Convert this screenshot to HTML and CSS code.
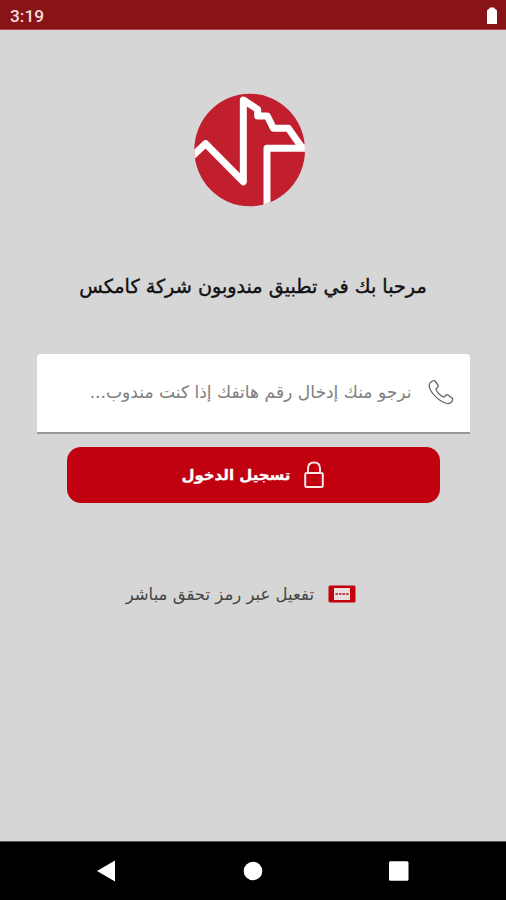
FILE: index.html
```html
<!DOCTYPE html>
<html lang="ar" dir="rtl">
<head>
    <meta charset="UTF-8">
    <meta name="viewport" content="width=device-width, initial-scale=1.0">
    <title>تسجيل الدخول</title>
    <link rel="stylesheet" href="styles.css">
</head>
<body>
    <header class="status">
        <span>3:19</span>
        <svg class="battery" viewBox="0 0 12 18"><path d="M1 4 Q1 2.500 3 2 L4 .5 H8 L9 2 Q11 2.500 11 4 V17 H1 Z" fill="#fff"/></svg>
    </header>

    <main class="login">
        <svg class="logo" viewBox="42 39 336 342">
            <defs>
                <clipPath id="disc"><ellipse cx="209" cy="210" rx="166" ry="169"/></clipPath>
            </defs>
            <g clip-path="url(#disc)">
                <rect x="42" y="39" width="336" height="342" fill="#c11f2e"/>
                <path d="M36 229 L77 191 L190 305 V60 L233 88 V108 H262 L280 145 H325 L365 202 H380 M380 205 H261 V390" fill="none" stroke="#fff" stroke-width="21" stroke-linejoin="round"/>
            </g>
        </svg>

        <h1 class="welcome">مرحبا بك في تطبيق مندوبون شركة كامكس</h1>

        <form class="form">
            <label class="field">
                <svg class="phone" viewBox="0 0 26 26"><path d="M2 4 Q5 .5 7 2 L10 6 Q11 8 8 9.500 Q8 12 11 15 Q14 18 16.500 18 Q18 15 20 16 L24 19 Q25.500 21 23 23.500 Q20 26 14 22.500 Q7 18.500 3 12 Q0 7 2 4 Z" fill="none" stroke="#666" stroke-width="1.300" stroke-linejoin="round"/></svg>
                <input type="tel" dir="rtl" placeholder="نرجو منك إدخال رقم هاتفك إذا كنت مندوب...">
            </label>
            <button type="button" class="submit">
                <svg class="lock" viewBox="0 0 20 28"><path d="M4 12 V7.500 Q4 1.500 10 1.500 Q16 1.500 16 7.500 V12" fill="none" stroke="#fbe4e4" stroke-width="2"/><rect x="1.200" y="12" width="17.600" height="14" rx="1.500" fill="none" stroke="#fbe4e4" stroke-width="2"/></svg>
                <span>تسجيل الدخول</span>
            </button>
        </form>

        <a class="code">
            <svg class="ticket" viewBox="0 0 28 18">
                <rect x=".5" y=".5" width="27" height="17" rx="1.500" fill="#c4000f"/>
                <rect x="6" y="3" width="16" height="12" fill="#e9dede"/>
                <path d="M7.500 9 H20.500" stroke="#b84046" stroke-width="2" stroke-dasharray="2.500 1"/>
            </svg>
            <span>تفعيل عبر رمز تحقق مباشر</span>
        </a>
    </main>

    <nav class="navbar">
        <svg viewBox="0 0 20 22"><path d="M0 11 L18 .5 V21.500 Z" fill="#fff"/></svg>
        <svg viewBox="0 0 20 22"><circle cx="10" cy="11" r="9.300" fill="#fff"/></svg>
        <svg viewBox="0 0 20 22"><rect x="0" y="1.300" width="19.500" height="19.500" rx="1.500" fill="#fff"/></svg>
    </nav>
</body>
</html>
```
FILE: styles.css
```css
* {
    box-sizing: border-box;
}
body {
    margin: 0;
    height: 900px;
    display: flex;
    flex-direction: column;
    background-color: #d6d6d6;
    font-family: "DejaVu Sans", sans-serif;
    overflow: hidden;
}
svg {
    display: block;
    flex: none;
}
.status {
    direction: ltr;
    display: flex;
    justify-content: space-between;
    align-items: center;
    height: 30px;
    padding: 2px 8px 0 10px;
    background-color: #891417;
    border-bottom: 1px solid #a94d4f;
    color: #f6dede;
    font: 500 17.3px Roboto, sans-serif;
}
.battery {
    width: 12px;
    height: 18px;
}
.login {
    flex: 1;
    display: flex;
    flex-direction: column;
    align-items: center;
    padding-top: 63px;
}
.logo {
    width: 112px;
    height: 114px;
    margin-right: 6px;
}
.welcome {
    margin: 64px 0 0;
    height: 32px;
    line-height: 32px;
    font-size: 19.2px;
    font-weight: normal;
    color: #111;
    -webkit-text-stroke: 0.4px #111;
    white-space: nowrap;
}
.form {
    width: 433px;
    margin-top: 51px;
}
.field {
    display: flex;
    align-items: center;
    gap: 16px;
    height: 80px;
    padding: 0 16px 3px 20px;
    background-color: #fff;
    border-bottom: 2px solid #999;
    border-radius: 4px 4px 0 0;
}
.phone {
    width: 26px;
    height: 26px;
}
.field input {
    flex: 1;
    min-width: 0;
    height: 40px;
    padding: 0;
    border: none;
    outline: none;
    background: none;
    font: 17.100px "DejaVu Sans", sans-serif;
}
.field input::placeholder {
    color: #808080;
    opacity: 1;
}
.submit {
    display: flex;
    align-items: center;
    gap: 13px;
    width: 373px;
    height: 56px;
    margin: 13px 30px 0;
    padding: 0 116px 0 0;
    border: none;
    border-radius: 14px;
    background-color: #c10010;
    color: #fff;
    font: bold 15px "DejaVu Sans", sans-serif;
    -webkit-text-stroke: 0.3px #fff;
    white-space: nowrap;
}
.lock {
    width: 20px;
    height: 28px;
}
.code {
    align-self: flex-start;
    display: flex;
    align-items: center;
    gap: 14px;
    margin: 75px 150px 0 0;
    height: 32px;
    color: #444;
    font-size: 16.5px;
    white-space: nowrap;
}
.ticket {
    width: 28px;
    height: 18px;
}
.navbar {
    direction: ltr;
    display: flex;
    align-items: center;
    gap: 126px;
    height: 59px;
    padding-left: 97px;
    border-top: 1px solid #555;
    background-color: #000;
}
.navbar svg {
    width: 20px;
    height: 22px;
}
```
